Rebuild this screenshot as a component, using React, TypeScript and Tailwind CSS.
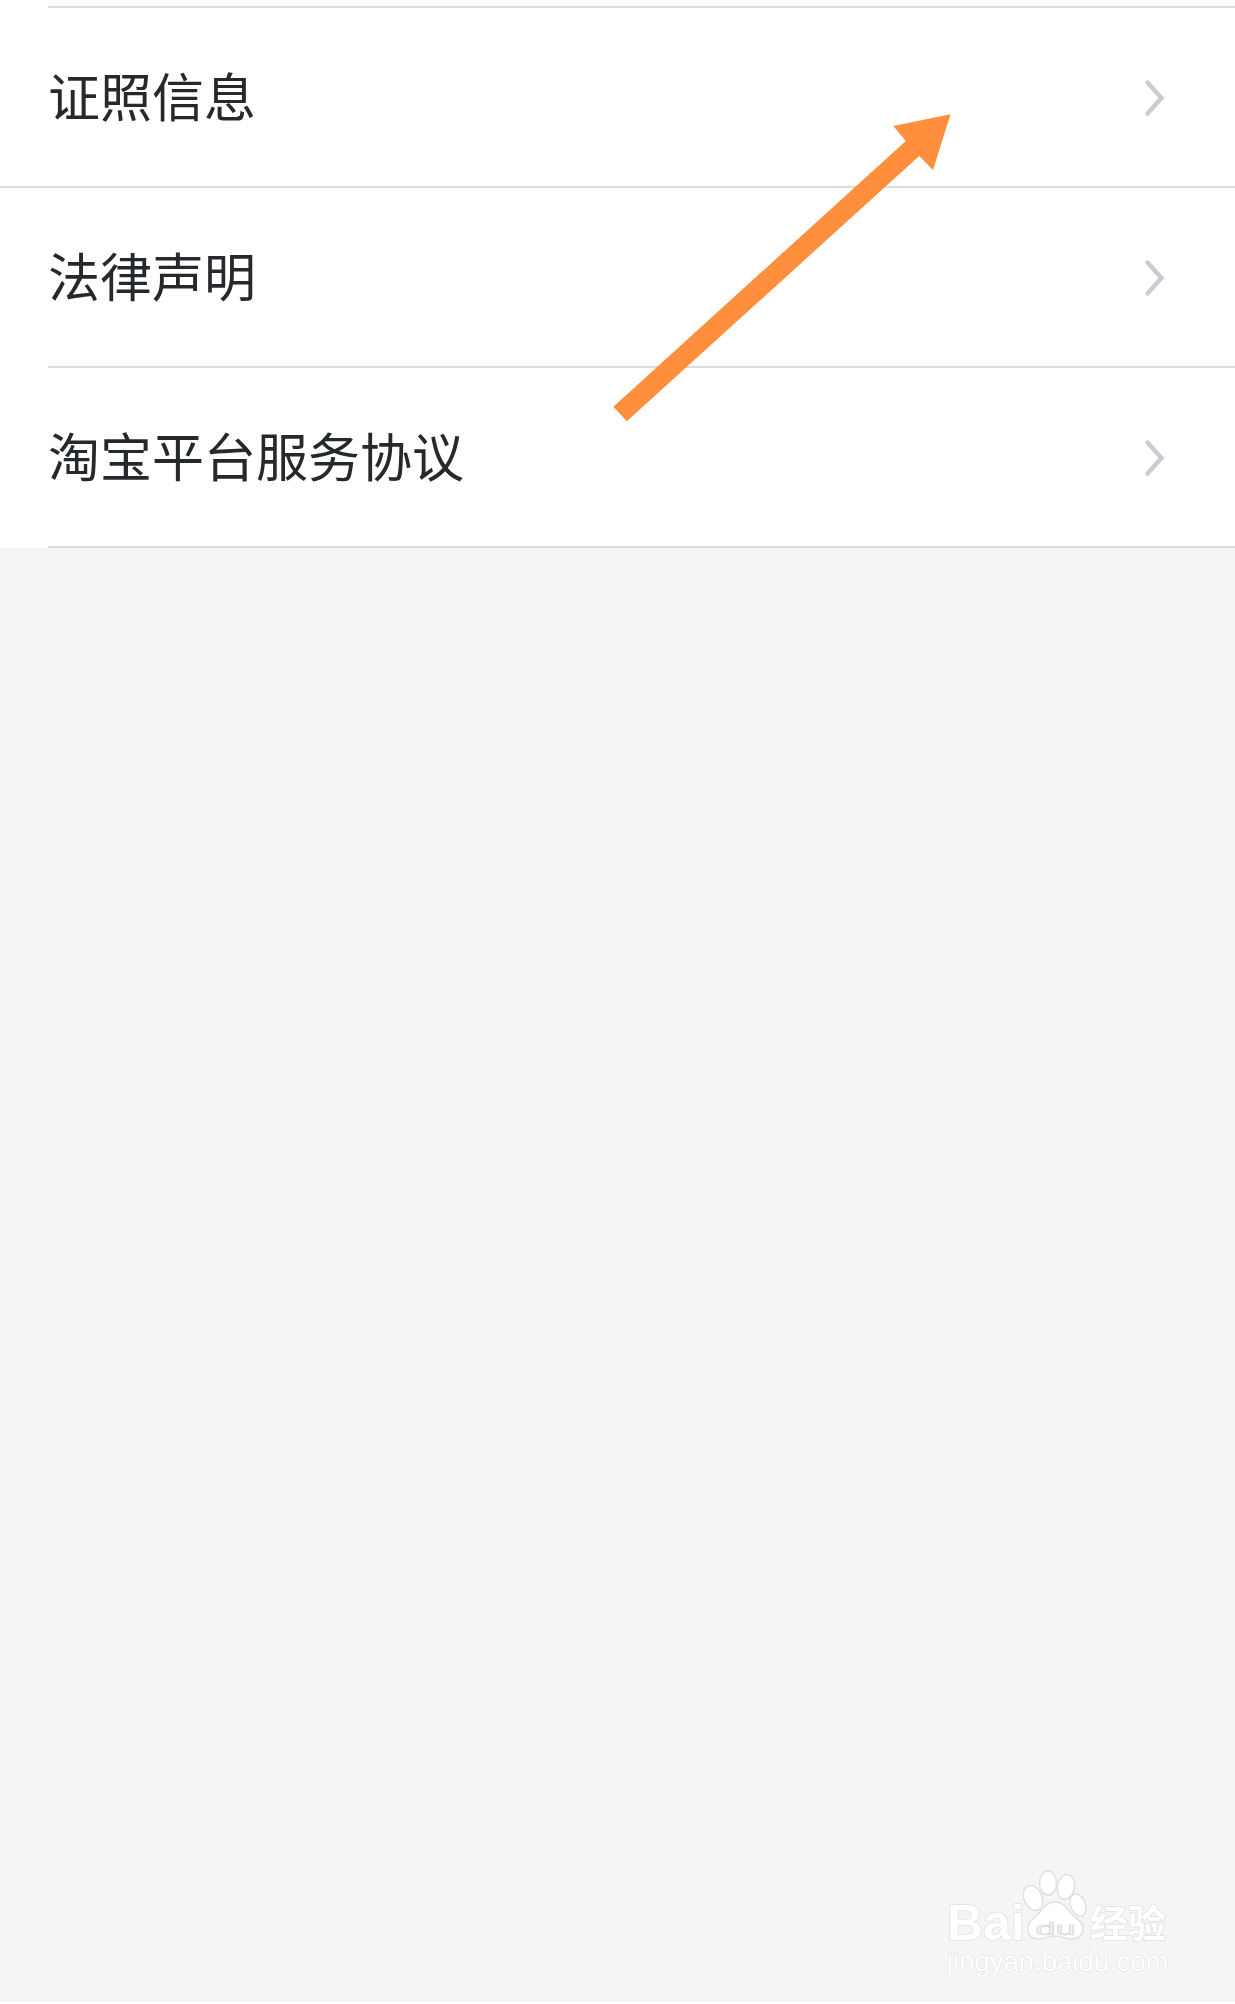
const CJK = "font-['Noto_Sans_CJK_SC','Noto_Sans_CJK_JP',sans-serif]";
const LATIN = "font-['Liberation_Sans',sans-serif]";

function Chevron() {
  return (
    <svg width="22" height="38" viewBox="0 0 22 38" className="shrink-0 mt-[2px]" fill="none">
      <path d="M3.5 3.5 L17.5 19 L3.5 34.5" stroke="#c9cdd3" strokeWidth="4.4" strokeLinecap="round" strokeLinejoin="miter" />
    </svg>
  );
}

function Row({ label, inset }: { label: string; inset: boolean }) {
  return (
    <div className={inset ? "pl-12" : ""}>
      <div className={`h-[180px] flex items-center justify-between border-b-2 border-[#dcdcdc] pr-[69px] ${inset ? "" : "pl-12"}`}>
        <span className={`${CJK} text-[52px] leading-none text-[#26292c] -mt-[5px]`}>{label}</span>
        <Chevron />
      </div>
    </div>
  );
}

function Paw() {
  return (
    <svg width="65" height="70" viewBox="0 0 65 70" fill="#ffffff" stroke="#dfe0e3" strokeWidth="1.5">
      <ellipse cx="10" cy="28" rx="9" ry="13" transform="rotate(-22 10 28)" />
      <ellipse cx="25" cy="13" rx="8.5" ry="12" />
      <ellipse cx="43" cy="17" rx="8.5" ry="12.5" transform="rotate(10 43 17)" />
      <ellipse cx="55" cy="35" rx="7.5" ry="11.5" transform="rotate(-20 55 35)" />
      <path d="M32 32 C43 32 45 42 53 48 C64 55 62 69 48 69 C42 69 38 66 32 66 C26 66 22 69 16 69 C3 69 1 55 11 48 C19 42 21 32 32 32 Z" />
    </svg>
  );
}

const wm = "text-white [-webkit-text-stroke:1.5px_#dfe0e3] [paint-order:stroke_fill] leading-none";

export default function App() {
  return (
    <div className="relative w-[1235px] h-[2004px] overflow-hidden bg-[#f5f5f7]">
      <div className="bg-white">
        <div className="h-2 pl-12">
          <div className="h-full border-b-2 border-[#dcdcdc]" />
        </div>
        <Row label="证照信息" inset={false} />
        <Row label="法律声明" inset />
        <Row label="淘宝平台服务协议" inset />
      </div>

      <svg className="absolute left-0 top-0" width="1235" height="500" fill="none">
        <polygon
          points="950.5,114.3 893.3,126 905.8,141 613.4,406.7 626.8,421.3 919.2,156 933,170"
          fill="#ff8f3d"
        />
      </svg>

      <div className="absolute left-[947px] top-[1870px] flex flex-col">
        <div className="flex items-end">
          <span className={`${LATIN} font-bold text-[50px] ${wm}`}>Bai</span>
          <div className="relative -ml-[2px] mb-2">
            <Paw />
            <span className={`absolute left-0 w-full text-center top-[49px] scale-x-[1.9] ${LATIN} text-[19px] leading-none text-[#f5f5f7] [-webkit-text-stroke:0.7px_#d9dade]`}>du</span>
          </div>
          <span className={`${CJK} font-bold text-[38px] ml-[2px] mb-[8px] ${wm}`}>经验</span>
        </div>
        <span className={`${LATIN} text-[27.5px] text-white [-webkit-text-stroke:1px_#dfe0e3] [paint-order:stroke_fill] leading-none`}>jingyan.baidu.com</span>
      </div>

      <div className="absolute left-0 right-0 bottom-0 h-[2px] bg-white" />
    </div>
  );
}
